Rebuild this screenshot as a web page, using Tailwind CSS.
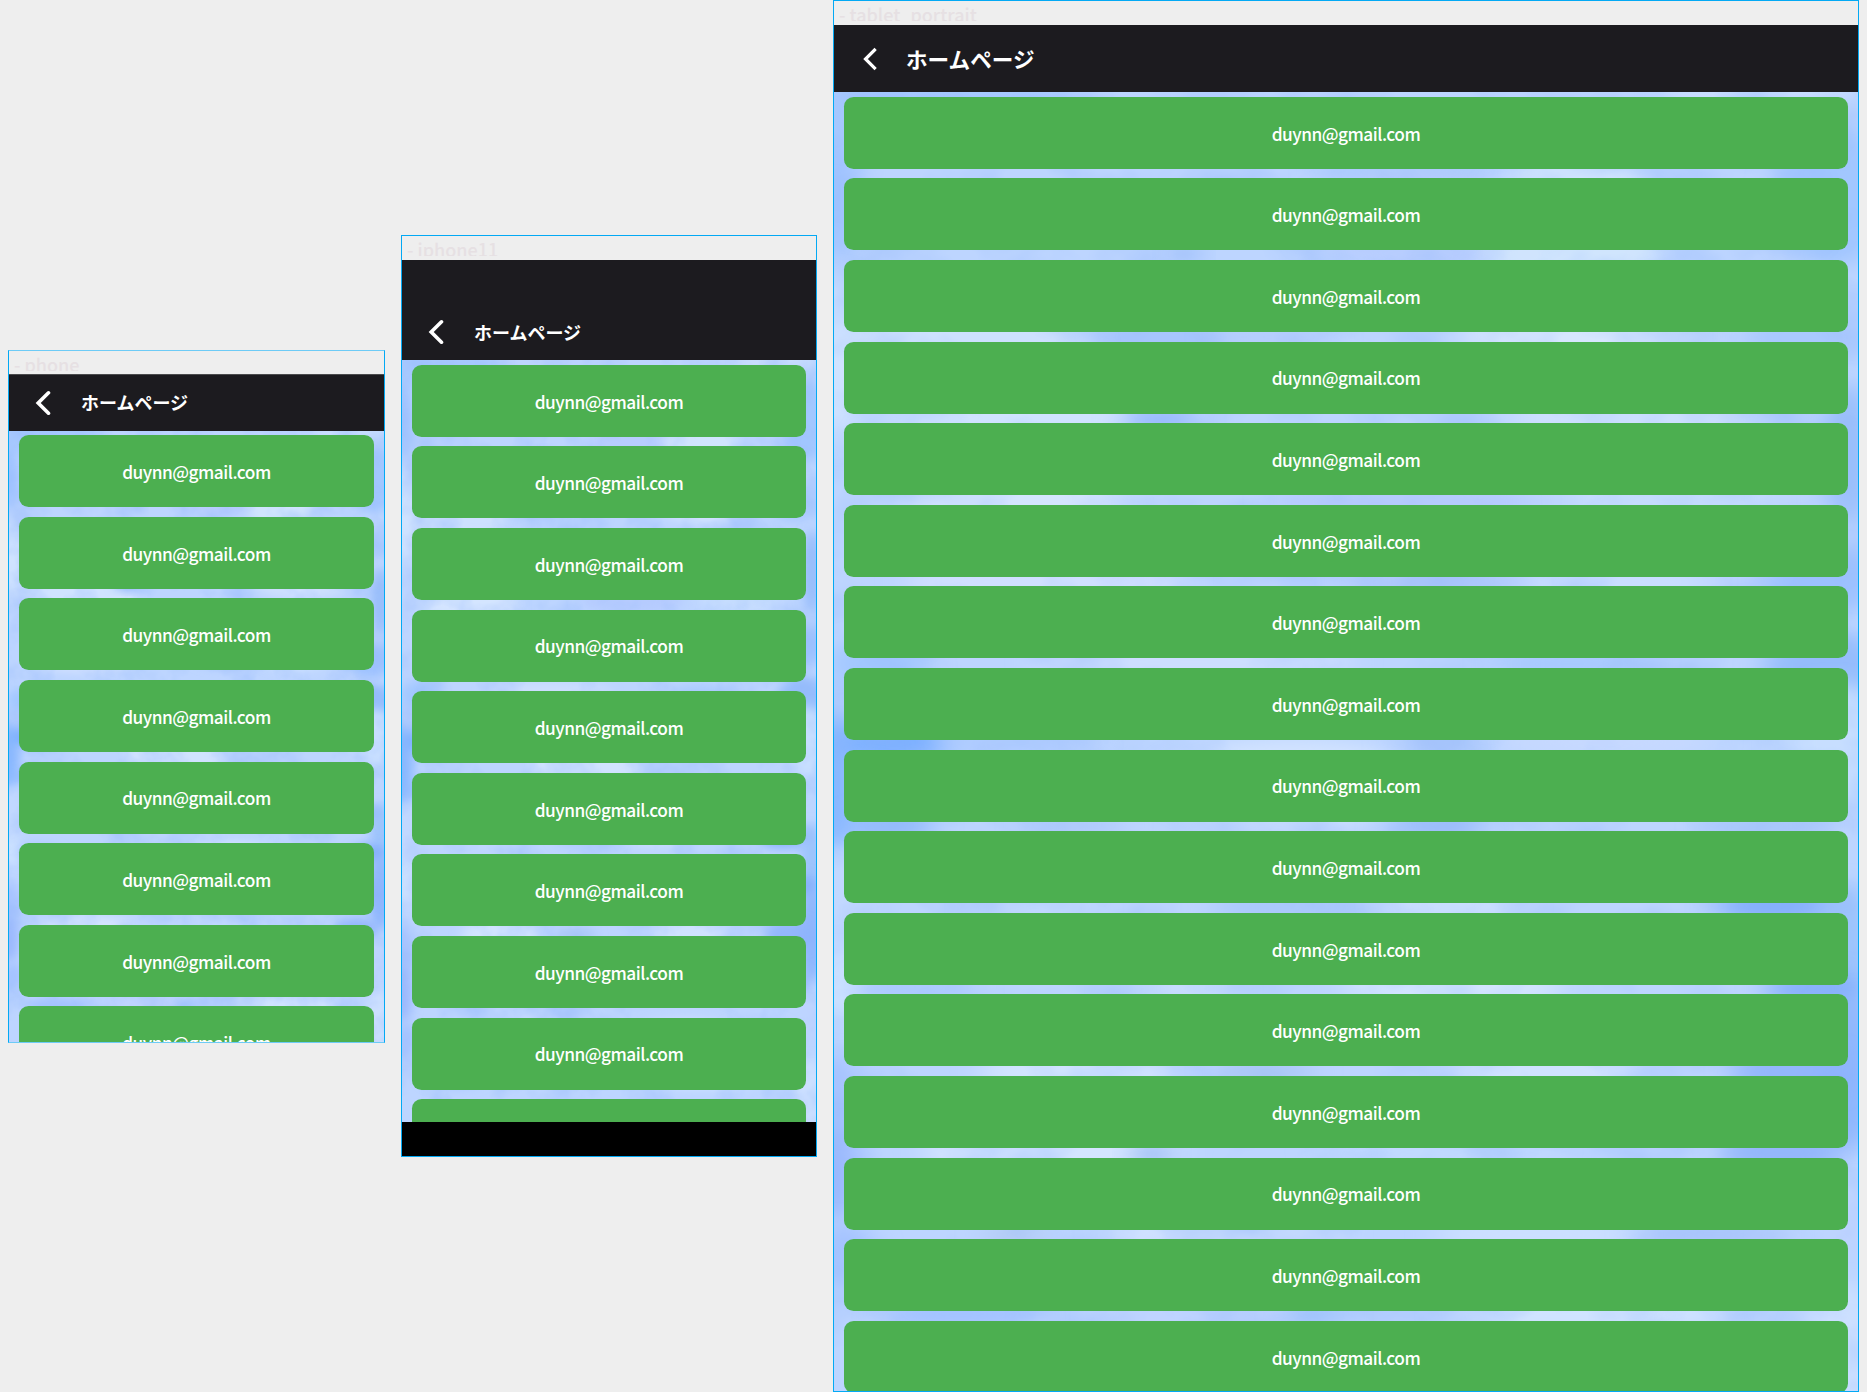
<!DOCTYPE html>
<html lang="ja">
<head>
<meta charset="utf-8">
<title>ホームページ</title>
<script src="https://cdn.jsdelivr.net/npm/@tailwindcss/browser@4"></script>
</head>
<body class="bg-[#eeeeee] font-['Noto_Sans_CJK_JP',sans-serif] overflow-hidden">
<svg class="hidden">
  <symbol id="sky" viewBox="0 0 1024 1299" preserveAspectRatio="none">
    <rect width="1024" height="1299" fill="#bdd5ff"/>
    <g id="clouds"></g>
    <rect width="1024" height="1299" filter="url(#wisps)"/>
  </symbol>
</svg>
<svg width="0" height="0" class="absolute">
  <defs>
    <filter id="soft" x="-50%" y="-50%" width="200%" height="200%"><feGaussianBlur stdDeviation="14 9"/></filter>
    <filter id="wisps" x="0" y="0" width="100%" height="100%" color-interpolation-filters="sRGB">
      <feTurbulence type="fractalNoise" baseFrequency="0.009 0.012" numOctaves="4" seed="7"/>
      <feColorMatrix values="0 0 0 0 0.58  0 0 0 0 0.72  0 0 0 0 0.98  1.200 0 0 0 -0.52"/>
    </filter>
  </defs>
</svg>

<main class="flex h-[1392px] w-[1867px] items-center gap-4 pl-2">
  <!-- phone -->
  <section class="mt-px flex h-[693px] w-[377px] shrink-0 flex-col overflow-hidden border border-[#03a9f4] border-y-[#6dcbf6]">
    <div class="h-[23px] shrink-0 pl-[5px]"><p class="h-[20px] overflow-hidden text-[18px] leading-[26px] font-medium whitespace-pre text-[#e6e0e3]">- phone</p></div>
    <header class="flex h-[57px] shrink-0 items-center border-t border-[#4b4b4d] bg-[#1c1b1f] pb-px pl-[26px] text-white">
      <svg class="h-[26px] w-[16px]" viewBox="0 0 16 26" fill="none" stroke="currentColor" stroke-width="3.6" stroke-linecap="round"><path d="M13.500 2.800 3.200 13l10.300 10.200"/></svg>
      <h1 class="pb-[2px] pl-[30px] text-[18px] leading-none font-bold">ホームページ</h1>
    </header>
    <div class="relative min-h-0 grow overflow-hidden">
      <svg class="absolute inset-0 size-full"><use href="#sky" width="100%" height="100%"/></svg>
      <div data-cards="8" class="relative flex flex-col gap-[9.6px] px-[9.6px] pt-[4.200px]"></div>
    </div>
  </section>
  <!-- iphone11 -->
  <section class="flex h-[922px] w-[416px] shrink-0 flex-col overflow-hidden border border-[#03a9f4]">
    <div class="h-[24px] shrink-0 pl-[5px]"><p class="h-[20px] overflow-hidden text-[18px] leading-[26px] font-medium whitespace-pre text-[#e6e0e3]">- iphone11</p></div>
    <header class="flex h-[100px] shrink-0 items-center bg-[#1c1b1f] pt-[44px] pl-[26px] text-white">
      <svg class="h-[26px] w-[16px]" viewBox="0 0 16 26" fill="none" stroke="currentColor" stroke-width="3.6" stroke-linecap="round"><path d="M13.500 2.800 3.200 13l10.300 10.200"/></svg>
      <h1 class="pl-[30px] text-[18px] leading-none font-bold">ホームページ</h1>
    </header>
    <div class="relative min-h-0 grow overflow-hidden">
      <svg class="absolute inset-0 size-full"><use href="#sky" width="100%" height="100%"/></svg>
      <div data-cards="10" class="relative flex flex-col gap-[9.6px] px-[9.6px] pt-[4.8px]"></div>
    </div>
    <div class="h-[34px] shrink-0 bg-black"></div>
  </section>
  <!-- tablet_portrait -->
  <section class="flex h-[1392px] w-[1026px] shrink-0 flex-col overflow-hidden border border-[#03a9f4]">
    <div class="h-[24px] shrink-0 pl-[5px]"><p class="h-[20px] overflow-hidden text-[18px] leading-[26px] font-medium whitespace-pre text-[#e6e0e3]">- tablet_portrait</p></div>
    <header class="flex h-[67px] shrink-0 items-center bg-[#1c1b1f] pl-[29px] text-white">
      <svg class="h-[24px] w-[16px]" viewBox="0 0 16 24" fill="none" stroke="currentColor" stroke-width="3.200" stroke-linecap="square"><path d="M11.500 3 2.500 12 11.500 21"/></svg>
      <h1 class="pl-[27px] text-[21.600px] leading-none font-bold">ホームページ</h1>
    </header>
    <div class="relative min-h-0 grow overflow-hidden">
      <svg class="absolute inset-0 size-full"><use href="#sky" width="100%" height="100%"/></svg>
      <div data-cards="16" class="relative flex flex-col gap-[9.6px] px-[9.6px] pt-[4.8px]"></div>
    </div>
  </section>
</main>
<script>
  // Sky patches: centre x, centre y, radius x, radius y, colour
  const patches = [
    [140,5,110,14,'#9ec4ff'],[574,80,90,22,'#a9c9fd'],[0,100,26,70,'#9ac0ff'],[1000,105,60,70,'#9dc4ff'],
    [30,15,50,40,'#a4c8ff'],[940,5,110,22,'#cbdfff'],[587,130,120,50,'#b6cbfe'],[568,410,130,24,'#b4c9fe'],
    [325,245,75,26,'#a4c3fd'],[440,245,60,14,'#b3cbfd'],
    [738,140,90,80,'#d3e7fd'],[751,245,120,30,'#dceafe'],[127,260,130,50,'#d0e3fe'],[0,270,30,90,'#d2e5ff'],
    [193,350,160,50,'#d4e5ff'],[170,415,120,30,'#d8e7ff'],[210,490,140,25,'#d3e2ff'],[360,570,160,22,'#d0e0ff'],
    [797,328,120,30,'#d0e2fe'],[837,407,100,24,'#c9dffe'],[784,490,90,22,'#cbe0ff'],[325,328,38,11,'#85adfb'],
    [350,162,16,10,'#8fb4f8'],[970,245,60,30,'#a6c7fe'],[1014,360,26,70,'#90b8fa'],[988,490,60,34,'#98beff'],
    [990,575,60,36,'#8eb8fc'],[42,572,50,26,'#9ec5ff'],[738,572,80,18,'#a5c8fe'],[600,490,90,16,'#aac6fb'],
    [60,650,60,22,'#70a9ff'],[0,690,26,70,'#7bb0ff'],[55,733,46,16,'#8bb7fd'],[180,650,80,18,'#adcaff'],
    [456,690,130,44,'#d5e5ff'],[600,733,50,15,'#99bcfa'],[607,650,50,16,'#a9c7fc'],[770,650,110,18,'#c8d9ff'],
    [240,733,50,14,'#acc8fb'],[1000,650,50,60,'#c9e0ff'],[930,735,60,16,'#a6c6fc'],[0,820,28,60,'#c3d9ff'],
    [0,895,30,34,'#cfe4ff'],[81,895,60,18,'#a9c8ff'],[200,814,60,16,'#c6dcff'],[456,814,80,16,'#a6c5fb'],
    [620,814,70,16,'#cce0ff'],[942,814,62,17,'#78a7fb'],[1014,850,26,60,'#95c0fb'],[981,897,50,20,'#80abfb'],
    [1014,980,34,80,'#86b0fd'],[960,980,60,26,'#8cb1fd'],[949,1060,60,24,'#8db2fc'],[620,897,110,24,'#d6e7ff'],
    [340,897,60,16,'#c9defe'],[246,980,100,26,'#d6e7ff'],[219,1060,130,30,'#d8e8ff'],[705,980,90,26,'#d4e5ff'],
    [430,980,50,13,'#a6c4f4'],[318,1062,20,12,'#8fb4f2'],[0,1000,26,40,'#a2bfff'],[0,1080,26,50,'#94b3fd'],
    [600,1060,120,18,'#c2daff'],[180,1143,30,10,'#adc6f0'],[390,1143,120,24,'#d4e4ff'],[700,1143,100,20,'#cfe2ff'],
    [880,1143,80,18,'#aac5fb'],[1018,1130,22,40,'#bdd2ff'],[10,1160,30,30,'#a0bfff'],[127,1222,80,18,'#9fbfff'],
    [750,1222,140,20,'#d4e6ff'],[370,1222,110,16,'#bfd4ff'],[480,1222,30,12,'#9bc2fd'],[1010,1260,40,70,'#cfe2ff']
  ];
  document.getElementById('clouds').innerHTML = patches.map(([x, y, rx, ry, c]) =>
    `<ellipse cx="${x}" cy="${y}" rx="${rx}" ry="${ry}" fill="${c}" fill-opacity="0.85" filter="url(#soft)"/>`).join('');
  document.querySelectorAll('[data-cards]').forEach(list => {
    list.innerHTML = '<div class="flex h-[72px] shrink-0 items-center justify-center rounded-[9.6px] bg-[#4caf50] pt-px text-[17.28px] leading-none font-medium tracking-[-0.49px] text-white">duynn@gmail.com</div>'.repeat(+list.dataset.cards);
  });
</script>
</body>
</html>
